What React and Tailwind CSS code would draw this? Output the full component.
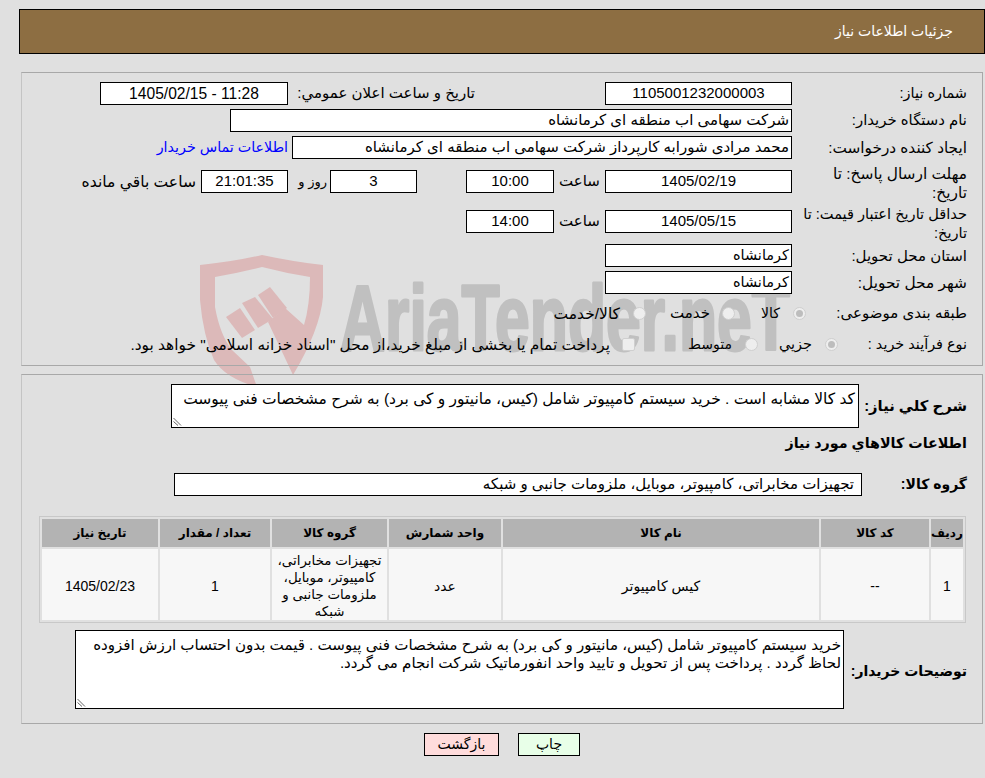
import React from "react";

const font = "font-['Liberation_Sans','DejaVu_Sans',sans-serif]";

const Box = ({ className = "", children }) => (
  <div className={`h-[23px] shrink-0 border border-black bg-white flex items-center whitespace-nowrap ${className}`}>
    {children}
  </div>
);

const Label = ({ className = "", children }) => (
  <div className={`w-[175px] shrink-0 leading-[19px] ${className}`}>{children}</div>
);

const Radio = ({ checked }) => (
  <span className="w-[13px] h-[13px] shrink-0 rounded-full border border-[#cfcfcf] bg-[#eeeeee] flex items-center justify-center">
    {checked && <span className="w-[7px] h-[7px] rounded-full bg-[#bdbdbd]" />}
  </span>
);

const Watermark = () => (
  <svg className="absolute left-0 top-0" width="985" height="400" viewBox="0 0 985 400">
    <path
      fill="#dcb9b9"
      d="M200 265 Q232 262 262 255 Q295 262 323 265 L323 297 Q320 330 293 375 L268 322 L285 308 L304 325 Q310 305 310 277 Q285 273 262 267 Q238 273 215 277 L215 307 Q220 335 232 350 L250 367 L257 387 Q225 378 214 360 Q203 335 200 300 Z"
    />
    <path fill="#dcb9b9" d="M226 317 L240 308 L255 330 L242 338 Z" />
    <path fill="#dcb9b9" d="M242 303 L255 297 L273 319 L258 328 Z" />
    <path fill="#dcb9b9" d="M258 295 L270 287 L287 308 L273 318 Z" />
    <text
      x="340"
      y="350"
      direction="ltr"
      fill="#c0c0c0"
      stroke="#c0c0c0"
      strokeWidth="3"
      strokeLinejoin="round"
      fontFamily="Liberation Sans"
      fontWeight="700"
      fontSize="92"
      textLength="450"
      lengthAdjust="spacingAndGlyphs"
    >
      AriaTender.neT
    </text>
  </svg>
);

const headers = ["رديف", "کد کالا", "نام کالا", "واحد شمارش", "گروه کالا", "تعداد / مقدار", "تاريخ نياز"];

const cell = "bg-[#f7f7f7] flex items-center justify-center text-center pt-[3px] text-[14px]";

function ResizeGrip() {
  return (
    <svg className="absolute left-[1px] bottom-[1px]" width="9" height="9" viewBox="0 0 9 9">
      <path d="M0.5 1 L8 8.5 M0.5 4.5 L5 8.5" stroke="#666666" strokeWidth="1" fill="none" />
    </svg>
  );
}

export default function App() {
  return (
    <div dir="rtl" className={`relative min-h-[778px] overflow-hidden bg-[#e0e0e0] text-[14px] text-black ${font}`}>
      <Watermark />
      <div className="relative pt-[9px]">
        <div className="ml-[19px] h-[45px] border border-black bg-[#8d6e42] flex items-center pr-[31px] text-white">
          جزئیات اطلاعات نیاز
        </div>

        <section className="mt-[18px] mr-[2px] ml-[21px] border border-[#a8a8a8] border-l-[#c4c4c4] pt-[9px] pb-[9px] pr-[15px]">
          <div className="flex items-center">
            <Label className="text-[14.5px]">شماره نیاز:</Label>
            <Box className="w-[187px] justify-center text-[15px]">1105001232000003</Box>
            <div className="mr-[130px] w-[182px] whitespace-nowrap text-[15px]">تاریخ و ساعت اعلان عمومي:</div>
            <Box className="w-[188px] mr-[5px] justify-center text-[15.6px]">11:28 - 1405/02/15</Box>
          </div>
          <div className="mt-[4px] flex items-center">
            <Label className="text-[14.9px]">نام دستگاه خریدار:</Label>
            <Box className="w-[562px] pr-[2px] text-[15px]">شرکت سهامی اب منطقه ای کرمانشاه</Box>
          </div>
          <div className="mt-[4px] flex items-center">
            <Label className="text-[15.3px]">ایجاد کننده درخواست:</Label>
            <Box className="w-[500px] pr-[2px] text-[15px]">محمد مرادی شورابه کارپرداز شرکت سهامی اب منطقه ای کرمانشاه</Box>
            <a className="mr-[4px] whitespace-nowrap text-[#0000ff] text-[14.3px]">اطلاعات تماس خریدار</a>
          </div>
          <div className="mt-[5px] flex items-start">
            <Label className="text-[15.4px]">مهلت ارسال پاسخ: تا<br />تاریخ:</Label>
            <div className="mt-[6px] flex items-center">
              <Box className="w-[187px] justify-center text-[15px]">1405/02/19</Box>
              <div className="w-[51px] text-center text-[15px]">ساعت</div>
              <Box className="w-[88px] justify-center text-[15px]">10:00</Box>
              <Box className="w-[87px] mr-[49px] justify-center text-[15px]">3</Box>
              <div className="w-[42px] pr-[3px] text-[13px]">روز و</div>
              <Box className="w-[87px] justify-center bg-[#ffffe0] text-[15px]">21:01:35</Box>
              <div className="mr-[5px] whitespace-nowrap text-[15.6px]">ساعت باقي مانده</div>
            </div>
          </div>
          <div className="mt-[3px] flex items-start">
            <Label className="text-[14.6px]">حداقل تاریخ اعتبار قیمت: تا<br />تاریخ:</Label>
            <div className="mt-[5px] flex items-center">
              <Box className="w-[187px] justify-center text-[15px]">1405/05/15</Box>
              <div className="w-[51px] text-center text-[15px]">ساعت</div>
              <Box className="w-[88px] justify-center text-[15px]">14:00</Box>
            </div>
          </div>
          <div className="mt-[1px] flex items-center">
            <Label className="text-[15px]">استان محل تحویل:</Label>
            <Box className="w-[187px] pr-[2px] text-[14.5px]">کرمانشاه</Box>
          </div>
          <div className="mt-[4px] flex items-center">
            <Label className="text-[15.4px]">شهر محل تحویل:</Label>
            <Box className="w-[187px] pr-[2px] text-[14.5px]">کرمانشاه</Box>
          </div>
          <div className="mt-[8px] h-[23px] flex items-center">
            <div className="w-[161px] shrink-0 text-[15px] whitespace-nowrap">طبقه بندی موضوعی:</div>
            <Radio checked />
            <span className="mr-[13px] w-[45px]">کالا</span>
            <Radio />
            <span className="mr-[12px] w-[64px] text-[15px]">خدمت</span>
            <Radio />
            <span className="mr-[13px] text-[15.5px]">کالا/خدمت</span>
          </div>
          <div className="mt-[8px] h-[23px] flex items-center">
            <div className="w-[129px] shrink-0 text-[14.4px]">نوع فرآیند خرید :</div>
            <Radio checked />
            <span className="mr-[13px] w-[54px] text-[14.5px]">جزيي</span>
            <Radio />
            <span className="mr-[13px] w-[97px]">متوسط</span>
            <span className="w-[13px] h-[13px] shrink-0 rounded-[2px] border border-[#cfcfcf] bg-[#eeeeee]" />
            <span className="mr-[12px] whitespace-nowrap text-[15.4px]">پرداخت تمام یا بخشی از مبلغ خرید،از محل "اسناد خزانه اسلامی" خواهد بود.</span>
          </div>
        </section>

        <section className="mt-[8px] mr-[2px] ml-[21px] border border-[#a8a8a8] border-l-[#c4c4c4] pt-[9px] pb-[14px]">
          <div className="flex items-center pr-[15px]">
            <div className="w-[108px] shrink-0 font-bold text-[14.8px] whitespace-nowrap">شرح كلي نياز:</div>
            <div className="relative w-[688px] h-[44px] border border-black bg-white pr-[3px] pt-[2px] whitespace-nowrap text-[15.5px]">
              کد کالا مشابه است . خرید سیستم کامپیوتر شامل (کیس، مانیتور و کی برد) به شرح مشخصات فنی پیوست
              <ResizeGrip />
            </div>
          </div>
          <div className="mt-[6px] pr-[15px] font-bold leading-[19px] text-[14.3px]">اطلاعات کالاهاي مورد نياز</div>
          <div className="mt-[20px] flex items-center pr-[15px]">
            <div className="w-[105px] shrink-0 font-bold">گروه کالا:</div>
            <Box className="w-[688px] pr-[7px] text-[15px]">تجهیزات مخابراتی، کامپیوتر، موبایل، ملزومات جانبی و شبکه</Box>
          </div>

          <div className="mt-[20px] mr-[16px] ml-[17px] border border-[#c8c8c8] p-[2px] text-[12px]">
            <div className="grid grid-cols-[32px_108px_316px_112px_115px_110px_116px] grid-rows-[28px_71px] gap-[2px]">
              {headers.map((h) => (
                <div key={h} className="bg-[#b3b3b3] flex items-center justify-center font-bold whitespace-nowrap">
                  {h}
                </div>
              ))}
              <div className={cell}>1</div>
              <div className={cell}>--</div>
              <div className={cell}>کیس کامپیوتر</div>
              <div className={cell}>عدد</div>
              <div className="bg-[#f7f7f7] flex items-center justify-center text-center pt-[2px] px-[3px] text-[13.4px] leading-[17px]">
                تجهیزات مخابراتی، کامپیوتر، موبایل، ملزومات جانبی و شبکه
              </div>
              <div className={cell}>1</div>
              <div className={cell}>1405/02/23</div>
            </div>
          </div>

          <div className="mt-[7px] flex items-center pr-[15px]">
            <div className="w-[123px] shrink-0 font-bold whitespace-nowrap pt-[3px]">توضیحات خریدار:</div>
            <div className="relative w-[769px] h-[79px] border border-black bg-white px-[2px] pt-[5px] leading-[18px] text-[15.1px]">
              خرید سیستم کامپیوتر شامل (کیس، مانیتور و کی برد) به شرح مشخصات فنی پیوست . قیمت بدون احتساب ارزش افزوده لحاظ گردد . پرداخت پس از تحویل و تایید واحد انفورماتیک شرکت انجام می گردد.
              <ResizeGrip />
            </div>
          </div>
        </section>

        <div className="mt-[9px] flex justify-center gap-[19px] pl-[19px]">
          <button className="w-[62px] h-[23px] border border-black bg-[#e8ffe8]">چاپ</button>
          <button className="w-[75px] h-[23px] border border-black bg-[#ffdcdc]">بازگشت</button>
        </div>
      </div>
    </div>
  );
}
